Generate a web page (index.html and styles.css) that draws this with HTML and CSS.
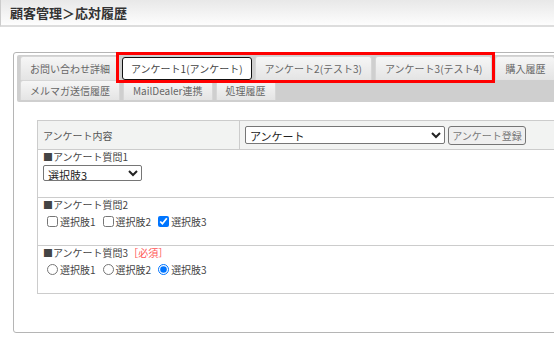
FILE: index.html
```html
<!DOCTYPE html>
<html>
<head>
    <title>顧客管理 - 応対履歴</title>
    <meta charset="UTF-8">
<link rel="stylesheet" href="styles.css">
</head>
<body>
    <div class="page-title">顧客管理＞応対履歴</div>

    <div class="panel">
        <div class="tabs">
            <span class="tab">お問い合わせ詳細</span>
            <span class="tab active">アンケート1(アンケート)</span>
            <span class="tab">アンケート2(テスト3)</span>
            <span class="tab">アンケート3(テスト4)</span>
            <span class="tab">購入履歴</span>
            <span class="tab">メルマガ送信履歴</span>
            <span class="tab">MailDealer連携</span>
            <span class="tab">処理履歴</span>
            <div class="highlight"></div>
        </div>

        <table class="survey">
            <tr class="head-row">
                <td class="label">アンケート内容</td>
                <td>
                    <select class="survey-select">
                        <option>アンケート</option>
                    </select>
                    <button type="button" class="btn">アンケート登録</button>
                </td>
            </tr>
            <tr>
                <td colspan="2" class="question">
                    <div class="q-title">■アンケート質問1</div>
                    <select class="answer-select">
                        <option>選択肢1</option>
                        <option>選択肢2</option>
                        <option selected>選択肢3</option>
                    </select>
                </td>
            </tr>
            <tr>
                <td colspan="2" class="question">
                    <div class="q-title">■アンケート質問2</div>
                    <div class="choices">
                        <label><input type="checkbox">選択肢1</label>
                        <label><input type="checkbox">選択肢2</label>
                        <label><input type="checkbox" checked>選択肢3</label>
                    </div>
                </td>
            </tr>
            <tr>
                <td colspan="2" class="question">
                    <div class="q-title">■アンケート質問3<span class="required">［必須］</span></div>
                    <div class="choices">
                        <label><input type="radio" name="q3">選択肢1</label>
                        <label><input type="radio" name="q3">選択肢2</label>
                        <label><input type="radio" name="q3" checked>選択肢3</label>
                    </div>
                </td>
            </tr>
        </table>
    </div>
</body>
</html>
```

FILE: styles.css
```css
/* Base */
body {
  margin: 0;
  width: 640px;
  overflow: hidden;
  font-family: "Noto Sans CJK JP", "Noto Sans", sans-serif;
  font-size: 10px;
  color: #444;
  background: #fff;
}

/* Page title bar */
.page-title {
  height: 25px;
  line-height: 25px;
  padding-left: 9px;
  border-left: 1px solid #ccc;
  border-bottom: 2px solid #ddd;
  background: linear-gradient(#e8e8e8, #fdfdfd);
  font-size: 13px;
  font-weight: bold;
  color: #333;
}

/* Outer panel */
.panel {
  margin: 25px 0 0 13px;
  height: 240px;
  padding: 2px 3px 37px 3px;
  border: 1px solid #b5b5b5;
  border-radius: 3px;
}

/* Tab strip */
.tabs {
  position: relative;
  display: flex;
  flex-wrap: wrap;
  width: 560px;
  padding: 1px 3px 2px 3px;
  background: #cfcfcf;
  border-radius: 2px;
}

.tab {
  height: 23px;
  line-height: 23px;
  padding: 0 9px;
  margin-right: 3px;
  border: 1px solid #d6d6d6;
  border-bottom: 0;
  border-radius: 3px 3px 0 0;
  background: linear-gradient(#f6f6f6, #e4e4e4);
  color: #666;
  white-space: nowrap;
}

.tab:nth-child(n+6) {
  height: 19px;
  line-height: 19px;
}

.tab.active {
  height: 21px;
  line-height: 21px;
  margin-top: 1px;
  margin-left: -1px;
  padding: 0 8px;
  border: 1px solid #111;
  border-radius: 3px;
  background: #fff;
  color: #444;
}

/* Red box over the survey tabs */
.highlight {
  position: absolute;
  left: 99px;
  top: -3px;
  width: 373px;
  height: 25px;
  border: 3px solid #f00;
  pointer-events: none;
}

/* Survey table */
.survey {
  margin: 18px 0 0 20px;
  width: 560px;
  border-collapse: collapse;
  border: 1px solid #ccc;
}

.survey td {
  border-top: 1px solid #ccc;
  vertical-align: top;
  padding: 0 5px;
}

.head-row {
  background: #f2f3f2;
}

.head-row td {
  height: 28px;
  vertical-align: middle;
  padding: 0 3px 0 5px;
}

.head-row .label {
  width: 193px;
  border-right: 1px solid #ccc;
  color: #555;
}

.survey-select {
  width: 200px;
  height: 18px;
  font: inherit;
  font-size: 11px;
  color: #222;
  border: 1px solid #767676;
  border-radius: 2px;
  background: #fff;
  vertical-align: middle;
}

.btn {
  height: 19px;
  margin-left: 1px;
  padding: 0 3px;
  font: inherit;
  font-size: 10px;
  color: #777;
  background: #efefef;
  border: 1px solid #767676;
  border-radius: 3px;
  vertical-align: middle;
}

.question {
  height: 47px;
  padding-top: 3px;
}

.q-title {
  line-height: 14px;
  color: #444;
}

.required {
  color: #f55;
}

.answer-select {
  width: 99px;
  height: 16px;
  margin-top: 1px;
  font: inherit;
  font-size: 11px;
  color: #222;
  border: 1px solid #767676;
  border-radius: 2px;
  background: #fff;
}

.choices {
  display: flex;
  gap: 3px;
  margin-top: 2px;
  line-height: 15px;
}

.choices label {
  display: flex;
  align-items: center;
  font-size: 10px;
  color: #444;
}

.choices input {
  width: 11px;
  height: 11px;
  margin: 0 2px 0 4px;
}
```
